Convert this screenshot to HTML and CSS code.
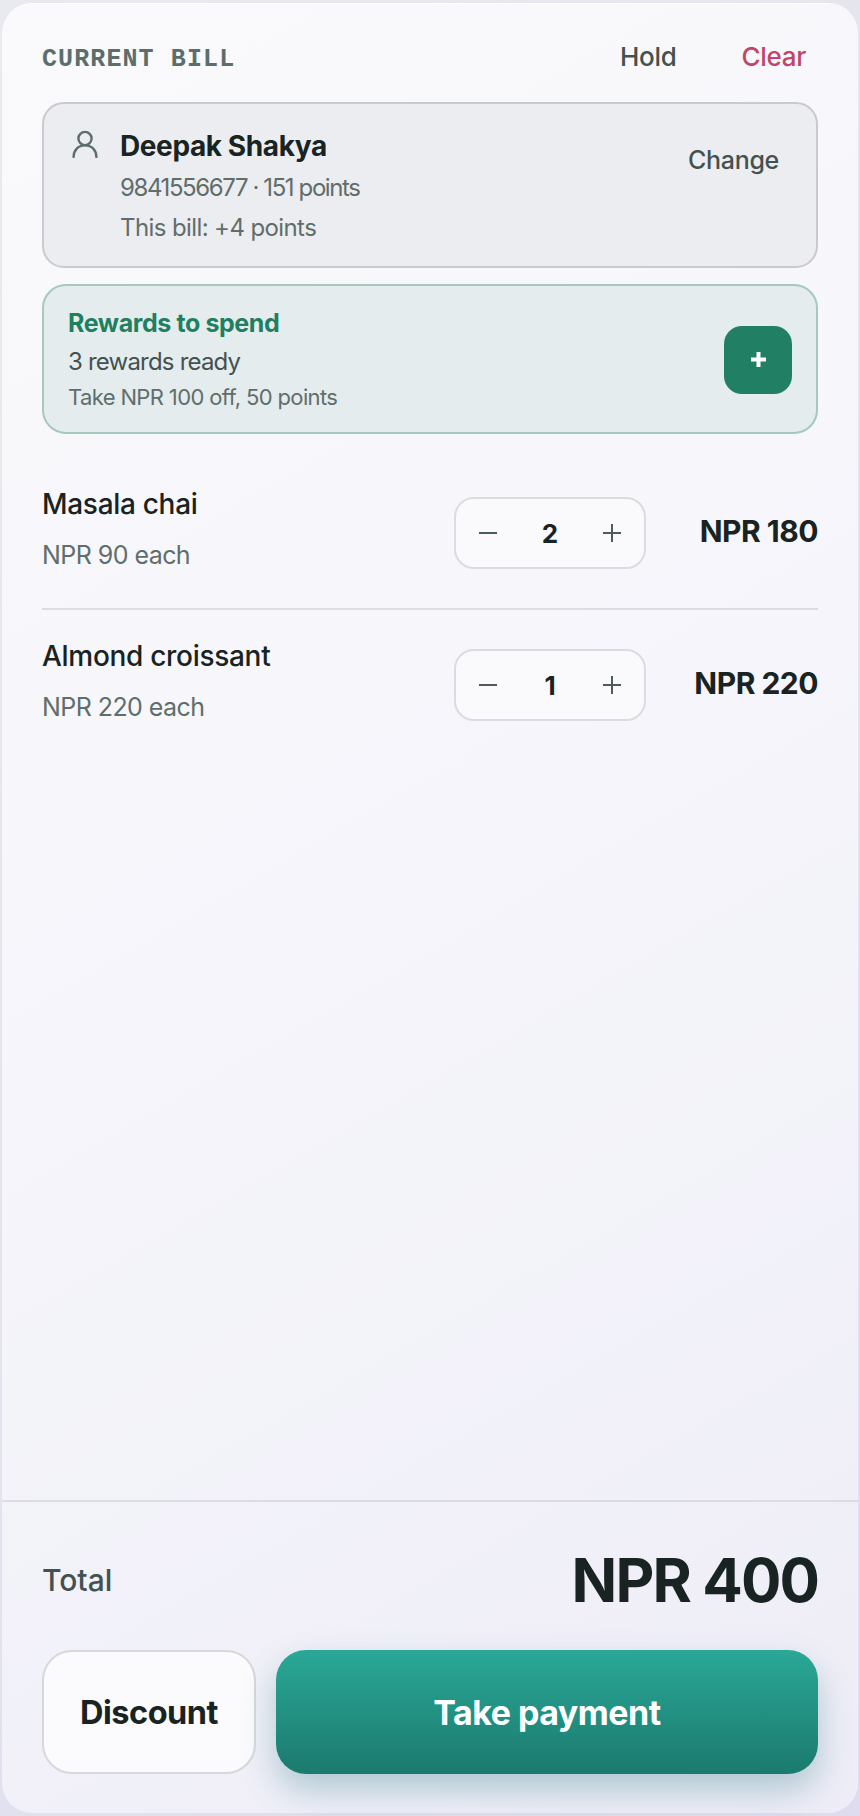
FILE: index.html
```html
<!DOCTYPE html>
<html lang="en">
<head>
    <meta charset="UTF-8">
    <meta name="viewport" content="width=device-width, initial-scale=1.0">
    <title>Current bill</title>
    <link rel="stylesheet" href="styles.css">
</head>
<body>
    <div class="panel">
        <div class="bill-top">
            <div class="bill-head">
                <span class="bill-title">CURRENT BILL</span>
                <div class="bill-actions">
                    <button class="link-btn">Hold</button>
                    <button class="link-btn clear">Clear</button>
                </div>
            </div>

            <div class="customer">
                <svg class="user-icon" viewBox="0 0 26 28" fill="none" stroke="#5c6e6a" stroke-width="2.4" stroke-linecap="round">
                    <circle cx="13" cy="8.5" r="6.6"/>
                    <path d="M1.6 27c0-6.8 4.6-11.6 11.4-11.6S24.4 20.2 24.4 27"/>
                </svg>
                <div class="customer-info">
                    <div class="customer-name">Deepak Shakya</div>
                    <div class="customer-sub phone">9841556677 · 151 points</div>
                    <div class="customer-sub">This bill: +4 points</div>
                </div>
                <button class="link-btn change">Change</button>
            </div>

            <div class="rewards">
                <div class="rewards-text">
                    <div class="rewards-title">Rewards to spend</div>
                    <div class="rewards-count">3 rewards ready</div>
                    <div class="rewards-offer">Take NPR 100 off, 50 points</div>
                </div>
                <button class="rewards-add" aria-label="Add reward">
                    <svg viewBox="0 0 15 15" width="15" height="15" stroke="#fff" stroke-width="4"><path d="M0 7.5h15M7.5 0v15"/></svg>
                </button>
            </div>

            <div class="items">
                <div class="item">
                    <div class="item-info">
                        <div class="item-name">Masala chai</div>
                        <div class="item-each">NPR 90 each</div>
                    </div>
                    <div class="stepper">
                        <svg viewBox="0 0 18 18" width="18" height="18" stroke="#4c5d5a" stroke-width="2"><path d="M0 9h18"/></svg>
                        <span class="qty">2</span>
                        <svg viewBox="0 0 18 18" width="18" height="18" stroke="#4c5d5a" stroke-width="2"><path d="M0 9h18M9 0v18"/></svg>
                    </div>
                    <div class="item-price">NPR 180</div>
                </div>
                <div class="item">
                    <div class="item-info">
                        <div class="item-name">Almond croissant</div>
                        <div class="item-each">NPR 220 each</div>
                    </div>
                    <div class="stepper">
                        <svg viewBox="0 0 18 18" width="18" height="18" stroke="#4c5d5a" stroke-width="2"><path d="M0 9h18"/></svg>
                        <span class="qty">1</span>
                        <svg viewBox="0 0 18 18" width="18" height="18" stroke="#4c5d5a" stroke-width="2"><path d="M0 9h18M9 0v18"/></svg>
                    </div>
                    <div class="item-price">NPR 220</div>
                </div>
            </div>
        </div>

        <div class="bill-foot">
            <div class="total-row">
                <span class="total-label">Total</span>
                <span class="total-value">NPR 400</span>
            </div>
            <div class="foot-actions">
                <button class="discount-btn">Discount</button>
                <button class="pay-btn">Take payment</button>
            </div>
        </div>
    </div>
</body>
</html>
```

FILE: styles.css
```css
* {
    box-sizing: border-box;
}
html, body {
    height: 100%;
}
body {
    margin: 0;
    padding: 4px 2px 3px 2px;
    background: linear-gradient(135deg, #e9eaef, #dedcee);
    font-family: Inter, "Noto Sans", sans-serif;
    color: #182322;
}
button {
    font-family: Inter, "Noto Sans", sans-serif;
    background: none;
    border: none;
    padding: 0;
    cursor: pointer;
}
.panel {
    height: 100%;
    display: flex;
    flex-direction: column;
    justify-content: space-between;
    border-radius: 30px;
    background: linear-gradient(150deg, #fafafc, #f5f5fb 50%, #eeedf7);
    box-shadow: 0 -1px 0 #fff;
}
.bill-top {
    padding: 0 40px;
}
.bill-head {
    display: flex;
    justify-content: space-between;
    align-items: center;
    height: 98px;
    padding-top: 8px;
}
.bill-title {
    padding-top: 4px;
    font-family: "Liberation Mono", monospace;
    font-weight: 700;
    font-size: 25px;
    letter-spacing: 1.1px;
    color: #5c6e6a;
}
.bill-actions {
    display: flex;
    gap: 65px;
    padding-right: 12px;
    margin-bottom: 2px;
}
.link-btn {
    font-size: 26px;
    font-weight: 500;
    letter-spacing: -0.3px;
    color: #43514f;
}
.clear {
    color: #c04568;
}
.customer {
    display: flex;
    align-items: flex-start;
    height: 166px;
    padding: 26px 37px 0 28px;
    border: 2px solid #c9c9cf;
    border-radius: 22px;
    background: #ecedf1;
}
.user-icon {
    width: 26px;
    height: 28px;
    flex: none;
    margin-right: 22px;
}
.customer-info {
    flex: 1;
}
.customer-name {
    font-size: 28px;
    font-weight: 700;
    letter-spacing: -0.4px;
    line-height: 32px;
    margin-bottom: 6px;
}
.customer-sub {
    font-size: 24px;
    line-height: 40px;
    letter-spacing: -0.6px;
    color: #5f6e6b;
}
.phone {
    letter-spacing: -1.4px;
}
.change {
    margin-top: 15px;
    font-size: 25px;
}
.rewards {
    display: flex;
    justify-content: space-between;
    align-items: center;
    height: 150px;
    margin-top: 16px;
    padding: 0 24px;
    border: 2px solid #a5c9bf;
    border-radius: 24px;
    background: #e4ecee;
}
.rewards-text {
    padding-top: 1px;
}
.rewards-title {
    font-size: 25px;
    font-weight: 700;
    letter-spacing: -0.4px;
    color: #1f7f61;
    line-height: 36px;
}
.rewards-count {
    font-size: 24px;
    letter-spacing: -0.8px;
    color: #43514f;
    line-height: 38px;
    margin: 2px 0 -2px;
}
.rewards-offer {
    font-size: 22px;
    letter-spacing: -0.63px;
    color: #5f6e6b;
    line-height: 36px;
}
.rewards-add {
    width: 68px;
    height: 68px;
    margin-top: 1px;
    border-radius: 18px;
    background: #218063;
    display: flex;
    align-items: center;
    justify-content: center;
}
.items {
    padding-top: 24px;
}
.item {
    display: flex;
    align-items: center;
    height: 152px;
    border-bottom: 2px solid #dcdce4;
}
.item:last-child {
    height: 150px;
    border-bottom: none;
}
.item-info {
    flex: 1;
    padding-bottom: 8px;
}
.item-name {
    font-size: 28px;
    font-weight: 500;
    letter-spacing: -0.3px;
    line-height: 36px;
    margin-bottom: 16px;
}
.item-each {
    font-size: 25px;
    letter-spacing: -0.55px;
    color: #5f6e6b;
    line-height: 34px;
}
.stepper {
    display: flex;
    align-items: center;
    justify-content: space-between;
    width: 192px;
    height: 72px;
    padding: 0 23px;
    border: 2px solid #dbdbe1;
    border-radius: 20px;
    background: #fafafd;
}
.qty {
    font-size: 26px;
    font-weight: 700;
}
.item-price {
    width: 172px;
    text-align: right;
    font-size: 30px;
    font-weight: 700;
    letter-spacing: -0.5px;
    margin-top: -4px;
}
.bill-foot {
    padding: 0 40px 39px;
    border-top: 2px solid #dcdbe5;
}
.total-row {
    display: flex;
    justify-content: space-between;
    align-items: center;
    height: 148px;
    padding-top: 8px;
}
.total-label {
    font-size: 30px;
    font-weight: 500;
    color: #43514f;
}
.total-value {
    font-size: 60px;
    font-weight: 700;
    letter-spacing: -1.9px;
}
.foot-actions {
    display: flex;
    gap: 20px;
}
.discount-btn, .pay-btn {
    height: 124px;
    border-radius: 30px;
    font-weight: 700;
    letter-spacing: -0.5px;
}
.discount-btn {
    width: 214px;
    font-size: 32.5px;
    border: 2px solid #d7d7dd;
    background: #fbfbfd;
    color: #182322;
}
.pay-btn {
    flex: 1;
    font-size: 34px;
    color: #fff;
    background: linear-gradient(180deg, #2aa897, #1b7a6e);
    box-shadow: 0 16px 34px rgba(27, 110, 120, 0.3);
}
```
